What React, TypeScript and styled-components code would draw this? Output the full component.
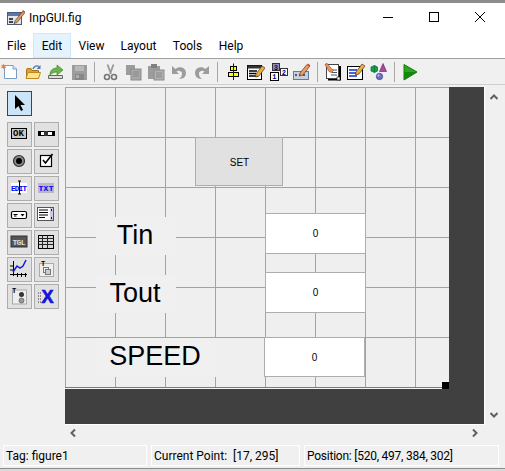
import React from "react";
import styled, { createGlobalStyle } from "styled-components";

const Global = createGlobalStyle`
  html, body { margin: 0; padding: 0; background: #f0f0f0; overflow: hidden; }
  #root { width: 505px; height: 471px; }
`;

const Page = styled.div`
  width: 505px; height: 471px; display: flex; flex-direction: column; background: #f0f0f0;
  font-family: Roboto, "Noto Sans", "Liberation Sans", sans-serif; font-size: 12px; color: #000; overflow: hidden;
`;
const TopStrip = styled.div`height: 3px; background: #8c8c8c; flex: none;`;
const TitleBar = styled.div`height: 30px; background: #fff; display: flex; align-items: center; padding-left: 7px; flex: none;`;
const TitleText = styled.span`margin-left: 4px; font-size: 12px;`;
const WindowButtons = styled.div`margin-left: auto; display: flex; padding: 0 2px 2px 0;`;
const WindowButton = styled.div`width: 46px; height: 28px; display: flex; align-items: center; justify-content: center;`;
const MenuBar = styled.div`height: 25px; background: #fff; display: flex; flex: none; border-bottom: 1px solid #a0a0a0; padding-left: 0;`;
const MenuItem = styled.div<{ $w: number; $active?: boolean }>`
  width: ${(p) => p.$w}px; box-sizing: border-box; display: flex; align-items: center; justify-content: center;
  background: ${(p) => (p.$active ? "#e5f3ff" : "transparent")};
  border: 1px solid ${(p) => (p.$active ? "#cce8ff" : "transparent")};
`;
const Toolbar = styled.div`
  height: 25px; flex: none; display: flex; align-items: center; gap: 5px; padding-left: 1px;
  border-bottom: 1px solid #cfcfcf; box-sizing: content-box;
`;
const ToolSep = styled.div`width: 1px; height: 20px; background: #a8a8a8; margin: 0 1px;`;
const Tool = styled.svg`width: 18px; height: 18px; flex: none; display: block;`;
const Workspace = styled.div`display: flex; margin-top: 2px; flex: none; height: 358px;`;
const Palette = styled.div`width: 65px; flex: none; box-sizing: border-box; padding: 4px 0 0 7px;`;
const PaletteGrid = styled.div`display: grid; grid-template-columns: 25px 25px; grid-auto-rows: 25px; gap: 2px; margin-top: 6px;`;
const PaletteButton = styled.div<{ $selected?: boolean }>`
  width: 25px; height: 25px; box-sizing: border-box; display: flex;
  background: ${(p) => (p.$selected ? "#cce4f7" : "#e1e1e1")};
  border: 1px solid ${(p) => (p.$selected ? "#005499" : "#adadad")};
`;
const Glyph = styled.svg`width: 23px; height: 23px; display: block;`;
const CenterColumn = styled.div`width: 420px; flex: none; display: flex; flex-direction: column;`;
const Viewport = styled.div`
  width: 420px; height: 338px; box-sizing: border-box; flex: none; background: #404040;
  border-right: 1px solid #fff; border-bottom: 1px solid #fff;
`;
const Figure = styled.div`
  position: relative; width: 384px; height: 302px; background-color: #efefef;
  background-image: linear-gradient(to right, #a3a3a3 1px, transparent 1px), linear-gradient(to bottom, #a3a3a3 1px, transparent 1px);
  background-size: 50px 50px; background-position: 0 0;
  font-family: "Liberation Sans", Arial, sans-serif;
`;
const Widget = styled.div<{ $x: number; $y: number; $w: number; $h: number }>`
  position: absolute; left: ${(p) => p.$x}px; top: ${(p) => p.$y}px; width: ${(p) => p.$w}px; height: ${(p) => p.$h}px;
  box-sizing: border-box; display: flex; align-items: center; justify-content: center;
`;
const PushButton = styled(Widget)`background: #e1e1e1; border: 1px solid #adadad; font-size: 10px; padding: 1px 0 0 1px;`;
const EditBox = styled(Widget)`background: #fff; border: 1px solid #adadad; font-size: 10px;`;
const BigLabel = styled(Widget)`background: #f0f0f0; font-size: 27px; padding: 0 2px 2px 0;`;
const FigureEdge = styled.div`position: absolute; left: 0; right: 0; bottom: 0; height: 2px; background: #f4f4f4; border-top: 1px solid #7a7a7a; box-sizing: border-box;`;
const Handle = styled.div`position: absolute; right: 0; bottom: 0; width: 7px; height: 7px; background: #000;`;
const HScroll = styled.div`height: 20px; box-sizing: border-box; flex: none; display: flex; align-items: center; justify-content: space-between; padding: 0 5px 5px 3px;`;
const VScroll = styled.div`width: 20px; height: 338px; flex: none; display: flex; flex-direction: column; align-items: center; justify-content: space-between; box-sizing: border-box; padding: 5px 3px 5px 0;`;
const Chevron = styled.svg`width: 10px; height: 10px; display: block;`;
const StatusBar = styled.div`height: 21px; flex: none; display: flex; gap: 4px; padding-left: 3px;`;
const StatusPane = styled.div<{ $w: number; $tight?: boolean }>`
  width: ${(p) => p.$w}px; box-sizing: border-box; border: 1px solid #fff; display: flex; align-items: center;
  padding-left: 2px; white-space: pre; font-size: 12px; letter-spacing: ${(p) => (p.$tight ? "-0.24px" : "0")};
`;
const BottomEdge = styled.div`margin-top: auto; height: 3px; flex: none; background: #d9d9d9; border-top: 1px solid #8c8c8c; box-sizing: border-box;`;

const mono = { fontFamily: '"Liberation Mono", monospace', fontWeight: 700 } as const;

const TitleIcon = () => (
  <Tool viewBox="0 0 18 18">
    <rect x="0.5" y="3.5" width="14" height="12" fill="#dfe6f0" stroke="#4a5a78" />
    <rect x="1" y="4" width="13" height="3" fill="#5a78a8" />
    <rect x="2" y="9" width="4" height="2" fill="#444" />
    <rect x="2" y="12" width="4" height="2" fill="#444" />
    <path d="M8 12l8-10 2 1.500-8 10-3 1z" fill="#e8a060" stroke="#5a3a20" strokeWidth="0.7" />
    <path d="M15 2.500l1-1.500 2 1.500-1 1.500z" fill="#d05050" />
  </Tool>
);

const Disabled = "#9c9c9c";

const NewIcon = () => (
  <Tool viewBox="0 0 18 18">
    <path d="M3.500 2.500H12L15.500 6V15.500H3.500Z" fill="#fff" stroke="#7d9cc4" />
    <path d="M12 2.500V6H15.500" fill="#dfe8f4" stroke="#7d9cc4" />
    <path d="M2.500 0.500l.8 1.800 1.900-.3-1 1.500 1 1.500-1.900-.3-.8 1.800-.8-1.800-1.700.3 1-1.500-1-1.500 1.700.3z" fill="#f08030" />
  </Tool>
);
const OpenIcon = () => (
  <Tool viewBox="0 0 18 18">
    <path d="M2.500 6.500V15.500H14.500V7.500H8L7 5.500H3z" fill="#d9a032" stroke="#a87818" />
    <path d="M2 15.500L4 9.500H16.500L14.500 15.500Z" fill="#ffe38a" stroke="#b88a20" />
    <path d="M9 6c1-3 4-4 6-2.500" fill="none" stroke="#4a78b8" strokeWidth="1.300" />
    <path d="M16.500 2v4h-4z" fill="#4a78b8" />
  </Tool>
);
const ImportIcon = () => (
  <Tool viewBox="0 0 18 18">
    <path d="M1.500 12.500H15.500V15.500H1.500Z" fill="#dcdcdc" stroke="#666" />
    <path d="M3 12c0-5 3-7 7-7V2l6 5-6 5V9c-3 0-5 1-7 3z" fill="#6cb44a" stroke="#3f8a2a" strokeWidth="0.7" />
  </Tool>
);
const SaveIcon = () => (
  <Tool viewBox="0 0 18 18">
    <rect x="2" y="2" width="15" height="15" fill={Disabled} />
    <rect x="5" y="3" width="9" height="5" fill="#b8b8b8" />
    <rect x="5" y="11" width="9" height="6" fill="#868686" />
    <rect x="6" y="12" width="3" height="3" fill="#b0b0b0" />
  </Tool>
);
const CutIcon = () => (
  <Tool viewBox="0 0 18 18">
    <path d="M6.500 1.500L10 11M12.500 1.500L9 11" stroke="#9a9a9a" strokeWidth="1.800" fill="none" />
    <circle cx="6" cy="14" r="2.500" fill="none" stroke="#777" strokeWidth="1.600" />
    <circle cx="13" cy="14" r="2.500" fill="none" stroke="#777" strokeWidth="1.600" />
  </Tool>
);
const CopyIcon = () => (
  <Tool viewBox="0 0 18 18">
    <rect x="2" y="2" width="9" height="10" fill={Disabled} />
    <rect x="7" y="6" width="10" height="11" fill="#a8a8a8" stroke="#8c8c8c" />
    <path d="M9 9h6M9 11h6M9 13h6" stroke="#8a8a8a" />
  </Tool>
);
const PasteIcon = () => (
  <Tool viewBox="0 0 18 18">
    <rect x="1" y="3" width="12" height="13" fill={Disabled} />
    <rect x="4" y="1" width="6" height="4" fill="#808080" />
    <rect x="7" y="7" width="10" height="10" fill="#b0b0b0" stroke="#8c8c8c" />
    <path d="M9 10h6M9 12h6M9 14h6" stroke="#8a8a8a" />
  </Tool>
);
const UndoIcon = () => (
  <Tool viewBox="0 0 18 18">
    <path d="M2 3v8h7L6.500 8.500c2-1.500 5.500-.5 5.500 2 0 2.500-1 4-3 5.500 5 0 7-3 7-6 0-5.500-6.500-7.500-10.500-4z" fill={Disabled} />
  </Tool>
);
const RedoIcon = () => (
  <Tool viewBox="0 0 18 18">
    <path d="M16 3v8H9l2.500-2.500c-2-1.500-5.500-.5-5.500 2 0 2.500 1 4 3 5.500-5 0-7-3-7-6 0-5.500 6.500-7.500 10.500-4z" fill={Disabled} />
  </Tool>
);
const AlignIcon = () => (
  <Tool viewBox="0 0 18 18">
    <rect x="6.500" y="3.500" width="6" height="4" fill="#ffff00" stroke="#000" />
    <rect x="4.500" y="9.500" width="10" height="4" fill="#ffff00" stroke="#000" />
    <path d="M9.500 0.500V17" stroke="#0000d0" />
  </Tool>
);
const MenuEditorIcon = () => (
  <Tool viewBox="0 0 18 18">
    <rect x="0.500" y="2.500" width="14" height="14" fill="#fff" stroke="#000" />
    <rect x="0.500" y="2.500" width="14" height="3" fill="#333" />
    <path d="M2 8h8M2 10.500h7M2 13h9" stroke="#000" strokeWidth="1.400" />
    <path d="M9 11l6-8 3 2-6 8-3.500 1z" fill="#e8b040" stroke="#503010" strokeWidth="0.700" />
  </Tool>
);
const TabOrderIcon = () => (
  <Tool viewBox="0 0 18 18" fontSize="7" style={mono}>
    <rect x="2.500" y="0.500" width="7" height="7" fill="#8f8fb0" stroke="#333" />
    <text x="3.800" y="6.500" fill="#000080">3</text>
    <rect x="10.500" y="5.500" width="7" height="7" fill="#fff" stroke="#333" />
    <text x="11.800" y="11.500" fill="#000080">2</text>
    <rect x="0.500" y="9.500" width="8" height="8" fill="#fff" stroke="#000" />
    <text x="2.300" y="16" fill="#000080">1</text>
  </Tool>
);
const ToolbarEditorIcon = () => (
  <Tool viewBox="0 0 18 18">
    <rect x="0.500" y="8.500" width="15" height="8" fill="#c8d0dc" stroke="#6a7a94" />
    <path d="M2 12h2M6 12h2M10 12h2" stroke="#4a5a90" strokeWidth="2" />
    <path d="M7 10l7-8.500 2.500 2-6.500 8.500-3.500 1z" fill="#e8a060" stroke="#5a3020" strokeWidth="0.700" />
    <path d="M14 1.500l1-1 2.500 2-1 1z" fill="#d04040" />
  </Tool>
);
const MFileIcon = () => (
  <Tool viewBox="0 0 18 18">
    <rect x="4" y="3" width="13" height="14.500" fill="#000" />
    <rect x="2.500" y="1.500" width="12" height="14" fill="#fff" stroke="#444" />
    <path d="M7 7h6M8 9.500h5M7 12h6" stroke="#555" />
    <path d="M1 1.500l2-1.200 6 7.200-1 2-3-1z" fill="#e89a60" stroke="#8a4020" strokeWidth="0.600" />
    <rect x="13" y="14" width="3" height="3" fill="#fff" stroke="#000" strokeWidth="0.600" />
  </Tool>
);
const PropertyIcon = () => (
  <Tool viewBox="0 0 18 18">
    <rect x="0.500" y="3.500" width="15" height="13" fill="#fff" stroke="#000" />
    <path d="M2 7h8M2 10h10M2 13h8" stroke="#1030d0" strokeWidth="1.300" />
    <path d="M9 9l6-8 3 2-6 8-3.500 1z" fill="#e8b040" stroke="#503010" strokeWidth="0.700" />
  </Tool>
);
const BrowserIcon = () => (
  <Tool viewBox="0 0 18 18">
    <path d="M1 4l3.500-1.500 3 1.500v4l-3 1.500-3.500-1.500z" fill="#18a040" stroke="#064" strokeWidth="0.700" />
    <path d="M4.500 2.500v7" stroke="#064" strokeWidth="0.600" />
    <path d="M13 0.500l3.500 8h-7z" fill="#a848a0" stroke="#602060" strokeWidth="0.600" />
    <circle cx="9.500" cy="13.500" r="3.200" fill="#6a70c0" stroke="#303070" strokeWidth="0.600" />
    <circle cx="8.500" cy="12.500" r="1" fill="#c8ccf0" />
  </Tool>
);
const RunIcon = () => (
  <Tool viewBox="0 0 18 18">
    <path d="M3 1.500L16 9L3 17Z" fill="#2aa81c" stroke="#167a10" />
    <path d="M3 9L16 9L3 17Z" fill="#16860f" />
  </Tool>
);

const BevelRect = ({ x, y, w, h, fill }: { x: number; y: number; w: number; h: number; fill: string }) => (
  <rect x={x + 0.5} y={y + 0.5} width={w} height={h} fill={fill} stroke="#000" />
);

const paletteGlyphs: React.ReactNode[] = [
  <g key="ok">
    <BevelRect x={3} y={5} w={15} h={10} fill="#c8c8c8" />
    <text x="5" y="13" fontSize="9" style={mono} fill="#000">OK</text>
  </g>,
  <g key="slider">
    <rect x="3.500" y="8.500" width="16" height="4" fill="#fff" stroke="#000" />
    <rect x="3" y="8" width="3" height="5" fill="#000" />
    <rect x="17" y="8" width="3" height="5" fill="#000" />
    <rect x="9" y="8" width="4" height="5" fill="#333" />
  </g>,
  <g key="radio">
    <circle cx="11" cy="11" r="5.500" fill="#888" stroke="#333" strokeWidth="1.200" />
    <circle cx="11" cy="11" r="3" fill="#000" />
  </g>,
  <g key="check">
    <rect x="5.500" y="5.500" width="11" height="11" fill="#fff" stroke="#000" strokeWidth="1.200" />
    <path d="M8 10l2.500 3 7-9" fill="none" stroke="#000" strokeWidth="1.600" />
  </g>,
  <g key="edit">
    <rect x="3" y="6" width="16" height="10" fill="#fff" />
    <text x="3" y="14" fontSize="7.500" style={mono} fill="#0000f0" textLength="16">EDIT</text>
    <path d="M11.500 4v13M10 4h3M10 17h3" stroke="#000" />
  </g>,
  <g key="txt">
    <rect x="3" y="6" width="16" height="10" fill="#b8b8c8" />
    <text x="3.500" y="13.500" fontSize="8" style={mono} fill="#0000f0" textLength="15">TXT</text>
  </g>,
  <g key="popup">
    <rect x="3.500" y="7.500" width="15" height="7" rx="1.500" fill="#fff" stroke="#000" strokeWidth="1.200" />
    <path d="M5.500 10.500h4M6 12h2.500" stroke="#000" />
    <path d="M12.500 10h4l-2 2.500z" fill="#000" />
  </g>,
  <g key="list">
    <rect x="2.500" y="3.500" width="16" height="13" fill="#fff" stroke="#555" />
    <path d="M4 6h9M4 8.500h9M4 11h9M4 13.500h6" stroke="#000" />
    <rect x="15" y="4" width="3" height="12" fill="#c8c8e0" />
    <path d="M16.500 5v2M16.500 13v2" stroke="#0000d0" />
  </g>,
  <g key="tgl">
    <rect x="3" y="5" width="16" height="11" fill="#555" stroke="#333" />
    <text x="4.500" y="13.500" fontSize="8" style={mono} fill="#ddd" textLength="13">TGL</text>
  </g>,
  <g key="table">
    <rect x="3.500" y="4.500" width="15" height="13" fill="#d8d8d8" stroke="#000" />
    <path d="M3.500 7.500h15M3.500 10.500h15M3.500 13.500h15M7.500 4.500v13M12.500 4.500v13" stroke="#222" />
  </g>,
  <g key="axes">
    <path d="M5.500 3v15M2 16.500h17M2 8h4M2 12h4M9.500 15v4M13.500 15v4M17.500 15v4" stroke="#000" fill="none" />
    <path d="M5 14l4-6 3 2 3-2 3-6" stroke="#1818e0" strokeWidth="1.500" fill="none" />
  </g>,
  <g key="panel">
    <rect x="4.500" y="5.500" width="14" height="13" fill="#eee" stroke="#aaa" />
    <text x="6" y="8" fontSize="7" style={mono} fill="#000">T</text>
    <rect x="8.500" y="9.500" width="5" height="5" fill="none" stroke="#777" />
    <rect x="10.500" y="11.500" width="5" height="5" fill="#ccc" stroke="#777" />
  </g>,
  <g key="group">
    <rect x="4.500" y="5" width="14" height="14" fill="#eee" stroke="#aaa" />
    <text x="4" y="8" fontSize="7" style={mono} fill="#000">T</text>
    <circle cx="13.500" cy="9.500" r="2.500" fill="#333" />
    <circle cx="13.500" cy="15.500" r="2.500" fill="#999" stroke="#555" strokeWidth="0.700" />
  </g>,
  <g key="activex">
    <path d="M3 8h4M3 11h4M3 14h4M3 17h3" stroke="#333" strokeDasharray="1 1" />
    <text x="6.500" y="18" fontSize="18" fontWeight="700" fontFamily="Liberation Sans" fill="#1414d8" stroke="#1414d8" strokeWidth="0.700">X</text>
  </g>,
];

const Up = () => <Chevron viewBox="0 0 10 10"><path d="M1.500 7L5 3.500 8.500 7" fill="none" stroke="#606060" strokeWidth="2" /></Chevron>;
const Down = () => <Chevron viewBox="0 0 10 10"><path d="M1.500 3L5 6.500 8.500 3" fill="none" stroke="#606060" strokeWidth="2" /></Chevron>;
const Left = () => <Chevron viewBox="0 0 10 10"><path d="M7 1.500L3.500 5 7 8.500" fill="none" stroke="#606060" strokeWidth="2" /></Chevron>;
const Right = () => <Chevron viewBox="0 0 10 10"><path d="M3 1.500L6.500 5 3 8.500" fill="none" stroke="#606060" strokeWidth="2" /></Chevron>;

const menus = [
  { label: "File", w: 33 },
  { label: "Edit", w: 38, active: true },
  { label: "View", w: 41 },
  { label: "Layout", w: 53 },
  { label: "Tools", w: 45 },
  { label: "Help", w: 42 },
];

export default function App() {
  return (
    <Page>
      <Global />
      <TopStrip />
      <TitleBar>
        <TitleIcon />
        <TitleText>InpGUI.fig</TitleText>
        <WindowButtons>
          <WindowButton>
            <Chevron viewBox="0 0 10 10"><path d="M0 5.500H10" stroke="#000" /></Chevron>
          </WindowButton>
          <WindowButton>
            <Chevron viewBox="0 0 10 10"><rect x="0.500" y="0.500" width="9" height="9" fill="none" stroke="#000" /></Chevron>
          </WindowButton>
          <WindowButton>
            <Chevron viewBox="0 0 10 10"><path d="M0 0L10 10M10 0L0 10" stroke="#000" /></Chevron>
          </WindowButton>
        </WindowButtons>
      </TitleBar>
      <MenuBar>
        {menus.map((m) => (
          <MenuItem key={m.label} $w={m.w} $active={m.active}>{m.label}</MenuItem>
        ))}
      </MenuBar>
      <Toolbar>
        <NewIcon /><OpenIcon /><ImportIcon /><SaveIcon />
        <ToolSep />
        <CutIcon /><CopyIcon /><PasteIcon /><UndoIcon /><RedoIcon />
        <ToolSep />
        <AlignIcon /><MenuEditorIcon /><TabOrderIcon /><ToolbarEditorIcon />
        <ToolSep />
        <MFileIcon /><PropertyIcon /><BrowserIcon />
        <ToolSep />
        <RunIcon />
      </Toolbar>
      <Workspace>
        <Palette>
          <PaletteButton $selected>
            <Glyph viewBox="0 0 23 23">
              <path d="M7 3v14l3.500-3 2.500 5 2-1-2.500-5H17z" fill="#000" />
            </Glyph>
          </PaletteButton>
          <PaletteGrid>
            {paletteGlyphs.map((g, i) => (
              <PaletteButton key={i}>
                <Glyph viewBox="0 0 23 23">{g}</Glyph>
              </PaletteButton>
            ))}
          </PaletteGrid>
        </Palette>
        <CenterColumn>
          <Viewport>
            <Figure>
              <PushButton $x={130} $y={50} $w={88} $h={49}>SET</PushButton>
              <BigLabel $x={31} $y={130} $w={80} $h={38}>Tin</BigLabel>
              <BigLabel $x={31} $y={188} $w={80} $h={38}>Tout</BigLabel>
              <BigLabel $x={31} $y={251} $w={120} $h={39}>SPEED</BigLabel>
              <EditBox $x={200} $y={126} $w={101} $h={41}>0</EditBox>
              <EditBox $x={200} $y={185} $w={101} $h={41}>0</EditBox>
              <EditBox $x={199} $y={250} $w={101} $h={40}>0</EditBox>
              <FigureEdge />
              <Handle />
            </Figure>
          </Viewport>
          <HScroll><Left /><Right /></HScroll>
        </CenterColumn>
        <VScroll><Up /><Down /></VScroll>
      </Workspace>
      <StatusBar>
        <StatusPane $w={144}>Tag: figure1</StatusPane>
        <StatusPane $w={149}>Current Point:  [17, 295]</StatusPane>
        <StatusPane $w={195} $tight>Position: [520, 497, 384, 302]</StatusPane>
      </StatusBar>
      <BottomEdge />
    </Page>
  );
}
